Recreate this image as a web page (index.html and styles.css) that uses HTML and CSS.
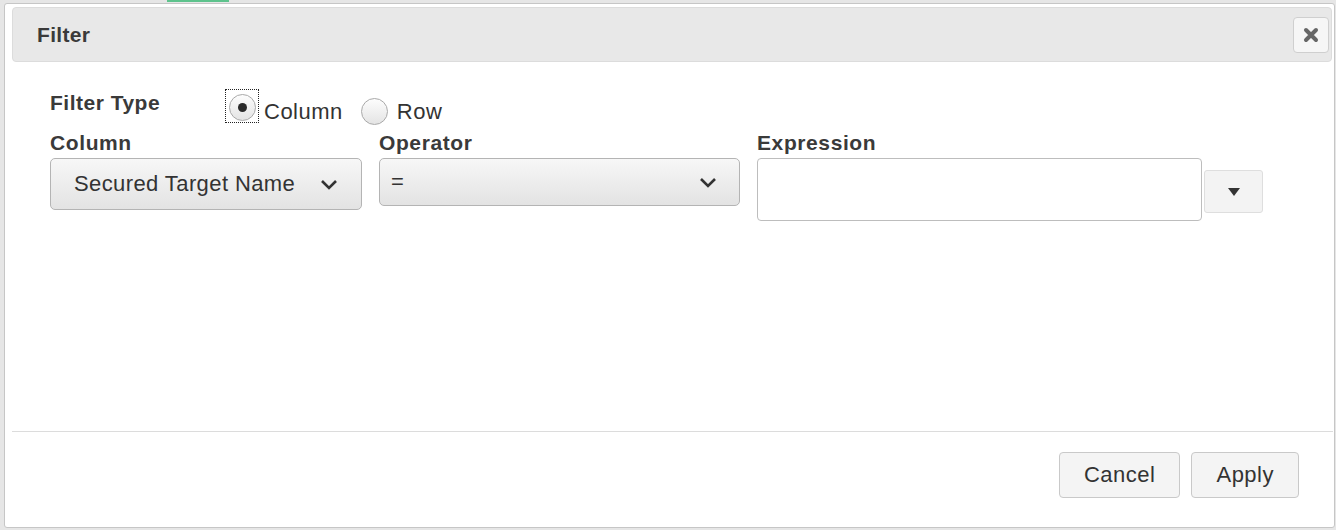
FILE: index.html
```html
<!DOCTYPE html>
<html lang="en">
<head>
<meta charset="utf-8">
<title>Filter</title>
<link rel="stylesheet" href="styles.css">
</head>
<body>
<div class="page-strip"></div>
<div class="dialog">
  <div class="titlebar">
    <span class="title">Filter</span>
    <button class="close" aria-label="Close">
      <svg width="16" height="16" viewBox="0 0 16 16"><path d="M3 3 L13 13 M13 3 L3 13" stroke="#666" stroke-width="4" stroke-linecap="round" fill="none"/></svg>
    </button>
  </div>
  <div class="content">
    <div class="type-row">
      <span class="type-label">Filter Type</span>
      <div class="radios">
        <label class="radio-opt">
          <span class="focus"><span class="radio checked"></span></span>
          <span class="radio-text">Column</span>
        </label>
        <label class="radio-opt">
          <span class="radio"></span>
          <span class="radio-text">Row</span>
        </label>
      </div>
    </div>
    <div class="fields">
      <div class="field f-column">
        <div class="field-label">Column</div>
        <div class="select sel-column">
          <span class="sel-text">Secured Target Name</span>
          <svg class="chev" width="18" height="11" viewBox="0 0 18 11"><path d="M2 2 L9 9 L16 2" stroke="#333" stroke-width="2.6" fill="none"/></svg>
        </div>
      </div>
      <div class="field f-operator">
        <div class="field-label">Operator</div>
        <div class="select sel-operator">
          <span class="sel-text">=</span>
          <svg class="chev" width="18" height="11" viewBox="0 0 18 11"><path d="M2 2 L9 9 L16 2" stroke="#333" stroke-width="2.6" fill="none"/></svg>
        </div>
      </div>
      <div class="field f-expr">
        <div class="field-label">Expression</div>
        <div class="expr-row">
          <div class="expr-input"></div>
          <button class="expr-btn" aria-label="Open">
            <svg width="14" height="10" viewBox="0 0 14 10"><path d="M1 1 L13 1 L7 9 Z" fill="#333"/></svg>
          </button>
        </div>
      </div>
    </div>
  </div>
  <div class="footer">
    <button class="btn">Cancel</button>
    <button class="btn">Apply</button>
  </div>
</div>
</body>
</html>
```

FILE: styles.css
```css
* { box-sizing: border-box; }
html, body {
  margin: 0;
  padding: 0;
}
body {
  background: #e6e6e6;
  font-family: "Liberation Sans", Arial, sans-serif;
  color: #333;
  width: 1336px;
  height: 530px;
  overflow: hidden;
  position: relative;
}
.page-strip {
  position: absolute;
  top: 0;
  left: 167px;
  width: 62px;
  height: 2px;
  background: #5ec38d;
}
.dialog {
  margin: 3px 0 0 4px;
  width: 1331px;
  height: 525px;
  background: #fff;
  border: 1px solid #c6c6c6;
  border-radius: 3px;
  display: flex;
  flex-direction: column;
}
.titlebar {
  margin: 3px 2px 0 7px;
  height: 55px;
  background: #e8e8e8;
  border: 1px solid #dcdcdc;
  border-radius: 4px;
  display: flex;
  align-items: center;
  justify-content: space-between;
  padding: 0 2px 0 24px;
}
.title {
  font-weight: bold;
  font-size: 21px;
  letter-spacing: 0.3px;
  color: #3a3a3a;
}
.close {
  width: 36px;
  height: 36px;
  background: #f6f6f6;
  border: 1px solid #cfcfcf;
  border-radius: 4px;
  padding: 0;
  display: flex;
  align-items: center;
  justify-content: center;
}
.content {
  flex: 1;
  padding: 26px 0 0 45px;
}
.type-row {
  display: flex;
  align-items: flex-start;
  height: 33px;
}
.type-label {
  width: 175px;
  font-weight: bold;
  font-size: 21px;
  letter-spacing: 0.5px;
  line-height: 30px;
  color: #3a3a3a;
}
.radios {
  display: flex;
  align-items: flex-end;
  height: 35px;
}
.radio-opt {
  display: flex;
  align-items: center;
}
.radio-opt + .radio-opt {
  margin-left: 18px;
}
.focus {
  width: 34px;
  height: 34px;
  border: 1px dotted #222;
  display: flex;
  align-items: center;
  justify-content: center;
}
.radio {
  width: 27px;
  height: 27px;
  border-radius: 50%;
  border: 1px solid #a9a9a9;
  background: linear-gradient(#fdfdfd, #e4e4e4);
  display: flex;
  align-items: center;
  justify-content: center;
}
.radio.checked::after {
  content: "";
  width: 9px;
  height: 9px;
  border-radius: 50%;
  background: #2a2a2a;
}
.radio-opt .radio:first-child {
  margin-bottom: -2px;
}
.radio-text {
  font-size: 22px;
  letter-spacing: 0.5px;
  line-height: 26px;
  margin-left: 5px;
  align-self: flex-end;
  margin-bottom: -2px;
}
.radio-opt + .radio-opt .radio-text {
  margin-left: 9px;
}
.fields {
  display: flex;
  gap: 17px;
  margin-top: 10px;
}
.field-label {
  font-weight: bold;
  font-size: 21px;
  letter-spacing: 0.6px;
  line-height: 24px;
  margin-bottom: 3px;
  color: #3a3a3a;
}
.select {
  border: 1px solid #b4b4b4;
  border-radius: 5px;
  background: linear-gradient(#f7f7f7, #e3e3e3);
  display: flex;
  align-items: center;
  justify-content: space-between;
  font-size: 22px;
  letter-spacing: 0.4px;
  color: #333;
}
.sel-column {
  width: 312px;
  height: 52px;
  padding: 0 23px 0 23px;
}
.sel-operator {
  width: 361px;
  height: 48px;
  padding: 0 22px 0 11px;
}
.expr-row {
  display: flex;
  align-items: flex-start;
  gap: 2px;
}
.expr-input {
  width: 445px;
  height: 63px;
  background: #fff;
  border: 1px solid #bdbdbd;
  border-radius: 4px;
}
.expr-btn {
  margin-top: 12px;
  width: 59px;
  height: 43px;
  background: #f3f3f3;
  border: 1px solid #dedede;
  border-radius: 3px;
  padding: 0;
  display: flex;
  align-items: center;
  justify-content: center;
}
.footer {
  margin: 0 1px 0 7px;
  border-top: 1px solid #dcdcdc;
  height: 96px;
  display: flex;
  justify-content: flex-end;
  align-items: flex-start;
  gap: 11px;
  padding: 20px 34px 0 0;
}
.btn {
  height: 46px;
  padding: 0 24px;
  background: #f4f4f4;
  border: 1px solid #c9c9c9;
  border-radius: 4px;
  font-family: "Liberation Sans", Arial, sans-serif;
  font-size: 22px;
  letter-spacing: 0.5px;
  color: #333;
}
```
